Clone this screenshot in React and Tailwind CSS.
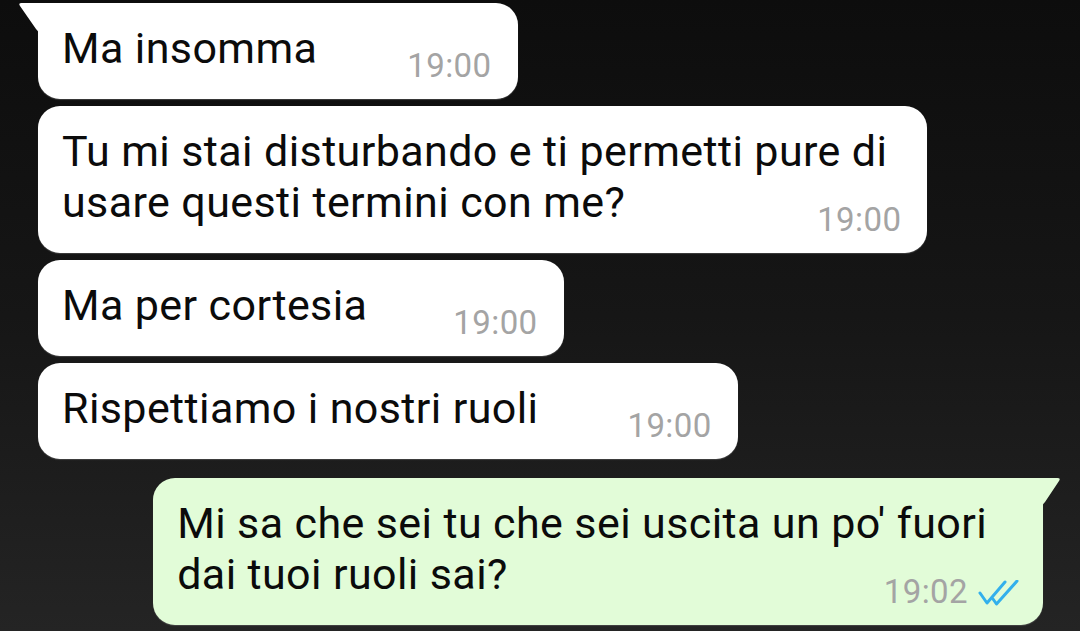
const Time = ({ children }) => (
  <span className="text-[33px] leading-[36px] tracking-[0.4px] text-[#a4a4a4] whitespace-nowrap">{children}</span>
);

const DoubleCheck = () => (
  <svg width="42" height="27" viewBox="0 0 42 27" fill="none" className="mb-[3px]">
    <path d="M3 13 L10 23 L28 2" stroke="#33b0ec" strokeWidth="3" strokeLinecap="round" strokeLinejoin="round" />
    <path d="M16 19 L19.5 24 L40 1" stroke="#33b0ec" strokeWidth="3" strokeLinecap="round" strokeLinejoin="round" />
  </svg>
);

const LeftTail = () => (
  <svg width="21" height="30" viewBox="0 0 21 30" className="absolute -left-[20px] top-0">
    <path d="M21 0 H3.5 Q0 0 2 3 L18 26 Q20 28 21 30 Z" fill="#ffffff" />
  </svg>
);

const RightTail = () => (
  <svg width="19" height="28" viewBox="0 0 19 28" className="absolute -right-[18px] top-0">
    <path d="M0 0 H15.5 Q19 0 17 3 L3 24 Q1 26 0 28 Z" fill="#e2fcd8" />
  </svg>
);

const Single = ({ text, time, gap, tail }) => (
  <div
    className={
      "relative flex items-end self-start rounded-[22px] bg-white pl-6 pr-[26px] pt-5 pb-[15px] shadow-[0_1px_1px_rgba(90,90,90,0.6)]" +
      (tail ? " rounded-tl-none" : "")
    }
  >
    {tail && <LeftTail />}
    <p className="mb-[10px] text-[43px] leading-[51px] tracking-[0.4px] text-[#0b0b0b] whitespace-nowrap">{text}</p>
    <span className={gap}>
      <Time>{time}</Time>
    </span>
  </div>
);

const App = () => {
  return (
    <div className="w-[1080px] h-[631px] overflow-hidden bg-gradient-to-b from-[#0d0d0d] via-[#161616] to-[#242424] flex flex-col pt-[3px] pl-[38px] pr-[37px] font-['Roboto',sans-serif]">
      <div className="flex flex-col gap-[7px]">
        <Single text="Ma insomma" time="19:00" gap="ml-[90px]" tail />

        <div className="flex flex-col self-start rounded-[22px] bg-white pl-6 pr-[26px] pt-5 pb-[15px] shadow-[0_1px_1px_rgba(90,90,90,0.6)]">
          <p className="pr-[14px] text-[43px] leading-[51px] tracking-[0.4px] text-[#0b0b0b] whitespace-nowrap">
            Tu mi stai disturbando e ti permetti pure di
            <br />
            usare questi termini con me?
          </p>
          <div className="self-end -mt-[26px]">
            <Time>19:00</Time>
          </div>
        </div>

        <Single text="Ma per cortesia" time="19:00" gap="ml-[86px]" />
        <Single text="Rispettiamo i nostri ruoli" time="19:00" gap="ml-[89px]" />
      </div>

      <div className="relative mt-[19px] flex flex-col self-end rounded-[22px] rounded-tr-none bg-[#e2fcd8] pl-6 pr-6 pt-5 pb-[15px] shadow-[0_1px_1px_rgba(90,90,90,0.6)]">
        <RightTail />
        <p className="pr-[32px] text-[43px] leading-[51px] tracking-[0.4px] text-[#0b0b0b] whitespace-nowrap">
          Mi sa che sei tu che sei uscita un po' fuori
          <br />
          dai tuoi ruoli sai?
        </p>
        <div className="self-end -mt-[26px] flex items-end gap-[9px]">
          <Time>19:02</Time>
          <DoubleCheck />
        </div>
      </div>
    </div>
  );
};

export default App;
